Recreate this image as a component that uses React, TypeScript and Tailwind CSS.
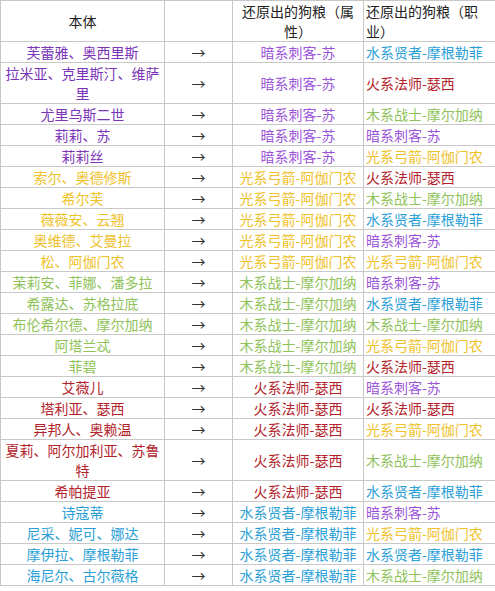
const PURPLE1 = 'text-[#7b35b8]'
const PURPLE = 'text-[#9a55d8]'
const YELLOW = 'text-[#efc12a]'
const GREEN = 'text-[#8fc35a]'
const RED = 'text-[#b3232b]'
const BLUE = 'text-[#2c9fd6]'

const SU = { label: '暗系刺客-苏', color: PURPLE }
const AGA = { label: '光系弓箭-阿伽门农', color: YELLOW }
const MOR = { label: '木系战士-摩尔加纳', color: GREEN }
const SEXI = { label: '火系法师-瑟西', color: RED }
const MGLF = { label: '水系贤者-摩根勒菲', color: BLUE }

const rows = [
  { name: '芙蕾雅、奥西里斯', color: PURPLE1, attr: SU, job: MGLF },
  { name: '拉米亚、克里斯汀、维萨里', color: PURPLE1, attr: SU, job: SEXI },
  { name: '尤里乌斯二世', color: PURPLE1, attr: SU, job: MOR },
  { name: '莉莉、苏', color: PURPLE1, attr: SU, job: SU },
  { name: '莉莉丝', color: PURPLE1, attr: SU, job: AGA },
  { name: '索尔、奥德修斯', color: YELLOW, attr: AGA, job: SEXI },
  { name: '希尔芙', color: YELLOW, attr: AGA, job: MOR },
  { name: '薇薇安、云翘', color: YELLOW, attr: AGA, job: MGLF },
  { name: '奥维德、艾曼拉', color: YELLOW, attr: AGA, job: SU },
  { name: '松、阿伽门农', color: YELLOW, attr: AGA, job: AGA },
  { name: '茉莉安、菲娜、潘多拉', color: GREEN, attr: MOR, job: SU },
  { name: '希露达、苏格拉底', color: GREEN, attr: MOR, job: MGLF },
  { name: '布伦希尔德、摩尔加纳', color: GREEN, attr: MOR, job: MOR },
  { name: '阿塔兰忒', color: GREEN, attr: MOR, job: AGA },
  { name: '菲碧', color: GREEN, attr: MOR, job: SEXI },
  { name: '艾薇儿', color: RED, attr: SEXI, job: SU },
  { name: '塔利亚、瑟西', color: RED, attr: SEXI, job: SEXI },
  { name: '异邦人、奥赖温', color: RED, attr: SEXI, job: AGA },
  { name: '夏莉、阿尔加利亚、苏鲁特', color: RED, attr: SEXI, job: MOR },
  { name: '希帕提亚', color: RED, attr: SEXI, job: MGLF },
  { name: '诗寇蒂', color: BLUE, attr: MGLF, job: SU },
  { name: '尼采、妮可、娜达', color: BLUE, attr: MGLF, job: AGA },
  { name: '摩伊拉、摩根勒菲', color: BLUE, attr: MGLF, job: MGLF },
  { name: '海尼尔、古尔薇格', color: BLUE, attr: MGLF, job: MOR },
]

const cell = 'border border-[#c8c8c8] p-0 align-middle'

export default function App() {
  return (
    <div
      className="w-[495px] h-[591px] bg-white overflow-hidden"
      style={{ fontFamily: '"Noto Sans CJK SC", "Noto Sans", sans-serif' }}
    >
      <table className="border-collapse table-fixed w-[495px] text-[14px] leading-[20px]">
        <colgroup>
          <col className="w-[164px]" />
          <col className="w-[68px]" />
          <col className="w-[131px]" />
          <col className="w-[132px]" />
        </colgroup>
        <thead>
          <tr className="h-[41px] text-[#222]">
            <th className={`${cell} font-normal text-center px-[2px]`}>本体</th>
            <th className={`${cell} font-normal`}></th>
            <th className={`${cell} font-normal text-center px-[4px]`}>还原出的狗粮（属性）</th>
            <th className={`${cell} font-normal text-left pl-[2px] pr-[4px]`}>还原出的狗粮（职业）</th>
          </tr>
        </thead>
        <tbody>
          {rows.map((r) => (
            <tr key={r.name}>
              <td className={`${cell} text-center px-[2px] ${r.color}`}>{r.name}</td>
              <td className={`${cell} text-center text-[#333]`}>→</td>
              <td className={`${cell} text-center px-[2px] whitespace-nowrap ${r.attr.color}`}>{r.attr.label}</td>
              <td className={`${cell} text-left pl-[2px] whitespace-nowrap ${r.job.color}`}>{r.job.label}</td>
            </tr>
          ))}
        </tbody>
      </table>
    </div>
  )
}
